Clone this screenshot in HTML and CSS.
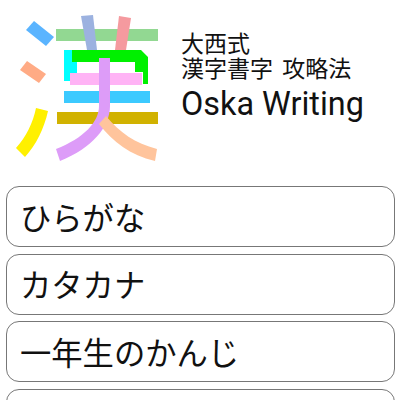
FILE: index.html
```html
<!DOCTYPE html>
<html lang="ja">
<head>
<meta charset="utf-8">
<title>Oska Writing</title>
<link rel="stylesheet" href="styles.css">
</head>
<body>
<header class="header">
  <svg class="logo" width="181" height="186" viewBox="0 0 181 186" aria-label="漢">
    <rect x="56" y="29" width="102" height="12" fill="#92d892"/>
    <path d="M81 16L93 15L97 50H87Z" fill="#9cb2e0"/>
    <path d="M119 16L131 18L126 50H115Z" fill="#f59a9f"/>
    <rect x="64" y="50" width="13" height="31" fill="#00ffff"/>
    <path d="M72 50H141L148 57V84H143V72H135V62H72Z" fill="#00f000"/>
    <rect x="70" y="73" width="72" height="12" fill="#ffb3f5"/>
    <rect x="64" y="91" width="86" height="12" fill="#3ccaff"/>
    <rect x="57" y="112" width="101" height="12" fill="#d1b200"/>
    <path d="M34 21L54 37L46 46L26 30Z" fill="#5ab4ff"/>
    <path d="M27 61L46 74L39 83L20 70Z" fill="#ffab85"/>
    <path d="M36 108L48 111C44 129 36 145 25 157L16 148C26 137 33 123 36 108Z" fill="#fff000"/>
    <path d="M99 58H110V106C110 127 92 148 60 161L56 149C84 138 99 122 99 106Z" fill="#dd9cf8"/>
    <path d="M106 116C120 133 135 143 157 149L155 161C130 155 113 142 99 124Z" fill="#ffc49c"/>
  </svg>
  <div class="title">
    <p class="title-ja">大西式<br>漢字書字 攻略法</p>
    <p class="title-en">Oska Writing</p>
  </div>
</header>
<nav class="menu">
  <a class="item">ひらがな</a>
  <a class="item">カタカナ</a>
  <a class="item">一年生のかんじ</a>
  <a class="item">二年生のかんじ</a>
</nav>
</body>
</html>
```
FILE: styles.css
```css
html, body {
  margin: 0;
  height: 400px;
  overflow: hidden;
  background: #fff;
  color: #111;
  font-family: "Noto Sans CJK JP", "Noto Sans", sans-serif;
}
.header {
  display: flex;
  height: 186px;
}
.logo {
  flex: none;
}
.title {
  padding-top: 30px;
}
.title-ja {
  margin: 0;
  font-size: 23px;
  line-height: 25px;
  word-spacing: 4px;
}
.title-en {
  margin: 5px 0 0;
  font-family: Roboto, "Liberation Sans", sans-serif;
  font-size: 32.4px;
  line-height: 38px;
}
.menu {
  display: flex;
  flex-direction: column;
  gap: 6.5px;
  padding: 0 5px 0 6px;
}
.item {
  display: flex;
  align-items: center;
  flex: none;
  box-sizing: border-box;
  height: 61px;
  padding: 0 0 1px 13px;
  border: 1px solid #777;
  border-radius: 13px;
  font-size: 31.3px;
}
```
